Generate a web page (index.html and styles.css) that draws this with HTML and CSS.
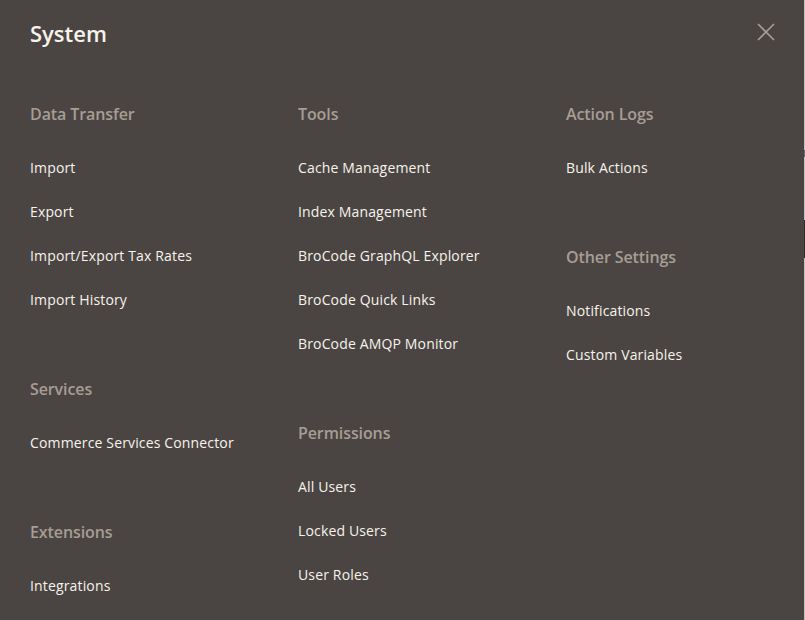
FILE: index.html
```html
<!DOCTYPE html>
<html lang="en">
<head>
<meta charset="utf-8">
<title>System</title>
<link rel="stylesheet" href="styles.css">
</head>
<body>
<div class="page">
  <div class="panel">
    <div class="panel-head">
      <h1 class="panel-title">System</h1>
      <button class="close" aria-label="Close">
        <svg width="18" height="18" viewBox="0 0 18 18"><path d="M1 1 L17 17 M17 1 L1 17" stroke="#a79d95" stroke-width="1.6" fill="none"/></svg>
      </button>
    </div>
    <div class="columns">
      <div class="column">
        <div class="section">
          <h2 class="section-title">Data Transfer</h2>
          <ul class="items">
            <li>Import</li>
            <li>Export</li>
            <li>Import/Export Tax Rates</li>
            <li>Import History</li>
          </ul>
        </div>
        <div class="section">
          <h2 class="section-title">Services</h2>
          <ul class="items">
            <li>Commerce Services Connector</li>
          </ul>
        </div>
        <div class="section">
          <h2 class="section-title">Extensions</h2>
          <ul class="items">
            <li>Integrations</li>
          </ul>
        </div>
      </div>
      <div class="column">
        <div class="section">
          <h2 class="section-title">Tools</h2>
          <ul class="items">
            <li>Cache Management</li>
            <li>Index Management</li>
            <li>BroCode GraphQL Explorer</li>
            <li>BroCode Quick Links</li>
            <li>BroCode AMQP Monitor</li>
          </ul>
        </div>
        <div class="section">
          <h2 class="section-title">Permissions</h2>
          <ul class="items">
            <li>All Users</li>
            <li>Locked Users</li>
            <li>User Roles</li>
          </ul>
        </div>
      </div>
      <div class="column">
        <div class="section">
          <h2 class="section-title">Action Logs</h2>
          <ul class="items">
            <li>Bulk Actions</li>
          </ul>
        </div>
        <div class="section">
          <h2 class="section-title">Other Settings</h2>
          <ul class="items">
            <li>Notifications</li>
            <li>Custom Variables</li>
          </ul>
        </div>
      </div>
    </div>
  </div>
  <div class="edge">
    <div class="edge-mark edge-mid"></div>
    <div class="edge-mark edge-dark"></div>
  </div>
</div>
</body>
</html>
```

FILE: styles.css
```css
* { box-sizing: border-box; }
html, body {
  margin: 0;
  padding: 0;
  height: 100%;
  overflow: hidden;
}
body {
  background: #4a4542;
  font-family: "Open Sans", "Liberation Sans", sans-serif;
}
.page {
  display: flex;
  height: 620px;
}
.panel {
  width: 804px;
  flex: none;
  background: #4a4542;
  padding: 18px 0 0 30px;
}
.panel-head {
  display: flex;
  justify-content: space-between;
  align-items: flex-start;
  height: 31px;
}
.panel-title {
  margin: 0;
  font-size: 22px;
  line-height: 30px;
  font-weight: 600;
  color: #f7f3eb;
}
.close {
  background: none;
  border: 0;
  padding: 0;
  margin: 5px 29px 0 0;
  width: 18px;
  height: 18px;
  display: block;
  cursor: pointer;
}
.close svg { display: block; }
.columns {
  display: grid;
  grid-template-columns: 268px 268px 238px;
  margin-top: 54px;
}
.section + .section { margin-top: 56px; }
.section-title {
  margin: 0 0 21px;
  font-size: 16px;
  line-height: 22px;
  font-weight: 600;
  letter-spacing: -0.1px;
  color: #a79d95;
}
.items {
  list-style: none;
  margin: 0;
  padding: 0;
}
.items li {
  height: 44px;
  line-height: 44px;
  font-size: 14px;
  letter-spacing: 0.15px;
  color: #f7f3eb;
  white-space: nowrap;
}
.edge {
  width: 1px;
  flex: none;
  background: #c3c3c3;
  display: flex;
  flex-direction: column;
}
.edge-mark { width: 1px; }
.edge-mid {
  margin-top: 150px;
  height: 7px;
  background: #6e6a68;
}
.edge-dark {
  margin-top: 63px;
  height: 38px;
  background: #302d2b;
}
```
